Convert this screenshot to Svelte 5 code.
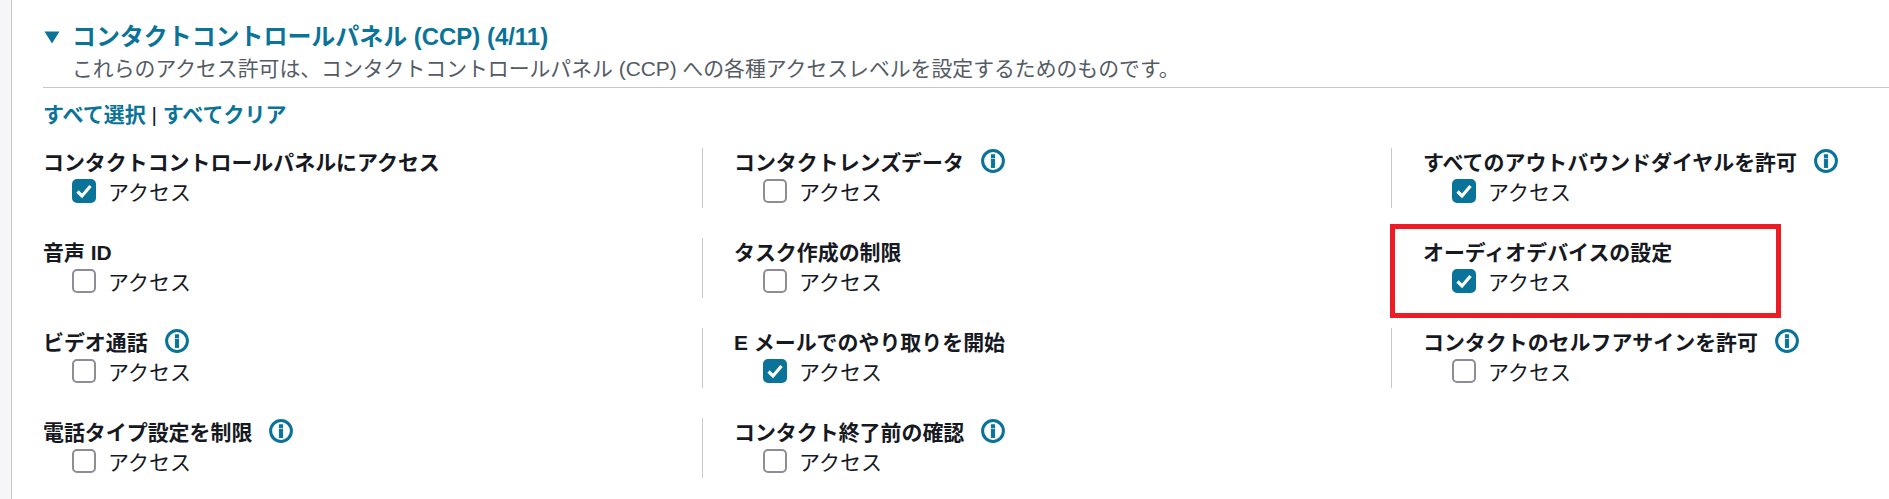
<script lang="ts">
	type Perm = { label: string; checked: boolean; info?: boolean; flagged?: boolean };

	const columns: Perm[][] = [
		[
			{ label: 'コンタクトコントロールパネルにアクセス', checked: true },
			{ label: '音声 ID', checked: false },
			{ label: 'ビデオ通話', checked: false, info: true },
			{ label: '電話タイプ設定を制限', checked: false, info: true }
		],
		[
			{ label: 'コンタクトレンズデータ', checked: false, info: true },
			{ label: 'タスク作成の制限', checked: false },
			{ label: 'E メールでのやり取りを開始', checked: true },
			{ label: 'コンタクト終了前の確認', checked: false, info: true }
		],
		[
			{ label: 'すべてのアウトバウンドダイヤルを許可', checked: true, info: true },
			{ label: 'オーディオデバイスの設定', checked: true, flagged: true },
			{ label: 'コンタクトのセルフアサインを許可', checked: false, info: true }
		]
	];
</script>

<div class="page">
	<main class="panel">
		<header class="head">
			<svg class="caret" viewBox="0 0 16 12" preserveAspectRatio="none" aria-hidden="true"><path d="M0.5 0.5h15L8 11.5z" /></svg>
			<div>
				<h2 class="title">コンタクトコントロールパネル (CCP) (4/11)</h2>
				<p class="sub">これらのアクセス許可は、コンタクトコントロールパネル (CCP) への各種アクセスレベルを設定するためのものです。</p>
			</div>
		</header>

		<div class="actions"><a href="#all">すべて選択</a> | <a href="#none">すべてクリア</a></div>

		<div class="grid">
			{#each columns as col, c}
				<div class="col">
					{#each col as perm}
						<div class="item" class:sep={c > 0}>
							<div class="label">
								<span>{perm.label}</span>
								{#if perm.info}
									<svg class="info" viewBox="0 0 24 24" aria-hidden="true">
										<circle cx="12" cy="12" r="10.4" fill="none" stroke-width="3" />
										<rect x="10.4" y="10.4" width="3.2" height="8" />
										<rect x="10.4" y="5.8" width="3.2" height="3" />
									</svg>
								{/if}
							</div>
							<label class="check">
								<span class="box" class:on={perm.checked}>
									{#if perm.checked}
										<svg viewBox="0 0 24 24" aria-hidden="true"><path d="M5.5 12.5l4.5 4.5L18.5 7" /></svg>
									{/if}
								</span>
								<span>アクセス</span>
							</label>
							{#if perm.flagged}<div class="flag"></div>{/if}
						</div>
					{/each}
				</div>
			{/each}
		</div>
	</main>
</div>

<style>
	:global(body) {
		margin: 0;
		background: #fff;
	}
	.page {
		height: 499px;
		overflow: hidden;
		background: #f6f6f9;
		padding-left: 11px;
		font-family: 'Liberation Sans', 'Noto Sans CJK JP', sans-serif;
		color: #16191f;
	}
	.panel {
		height: 100%;
		background: #fff;
		border-left: 1px solid #c6c6cd;
		padding: 21px 0 0 31px;
	}
	.head {
		display: flex;
		gap: 12px;
		border-bottom: 1px solid #c6c6cd;
		padding-bottom: 2px;
	}
	.caret {
		width: 16px;
		height: 13px;
		margin: 10px 0 0 1px;
		fill: #0a7399;
	}
	.title {
		margin: 0;
		font-size: 23.95px;
		line-height: 32px;
		font-weight: 700;
		color: #0a7399;
	}
	.sub {
		margin: 0;
		font-size: 20.85px;
		line-height: 32px;
		color: #545b64;
		height: 32px;
	}
	.actions {
		margin-top: 10px;
		font-size: 21px;
		line-height: 34px;
		color: #16191f;
	}
	.actions a {
		color: #0a7399;
		font-weight: 700;
		text-decoration: none;
	}
	.grid {
		display: grid;
		grid-template-columns: 659px 689px 1fr;
		margin-top: 16px;
	}
	.item {
		position: relative;
		height: 60px;
		margin-bottom: 30px;
	}
	.sep {
		border-left: 1px solid #c6c6cd;
		padding-left: 31px;
	}
	.label {
		display: flex;
		align-items: center;
		gap: 17px;
		height: 26px;
		font-size: 20.95px;
		font-weight: 700;
	}
	.info {
		width: 24px;
		height: 24px;
		stroke: #0a7399;
		fill: #0a7399;
	}
	.check {
		display: flex;
		align-items: center;
		gap: 12px;
		height: 34px;
		padding-left: 29px;
		font-size: 21px;
	}
	.box {
		box-sizing: border-box;
		width: 24px;
		height: 24px;
		border: 2px solid #8d8d95;
		border-radius: 5px;
		background: #fff;
	}
	.box.on {
		background: #0a7399;
		border-color: #0a7399;
	}
	.box svg {
		display: block;
		width: 24px;
		height: 24px;
		margin: -2px;
		fill: none;
		stroke: #fff;
		stroke-width: 3.2;
	}
	.flag {
		position: absolute;
		left: -2px;
		top: -14px;
		width: 391px;
		height: 94px;
		box-sizing: border-box;
		border: 5px solid #ed1c24;
	}
</style>
